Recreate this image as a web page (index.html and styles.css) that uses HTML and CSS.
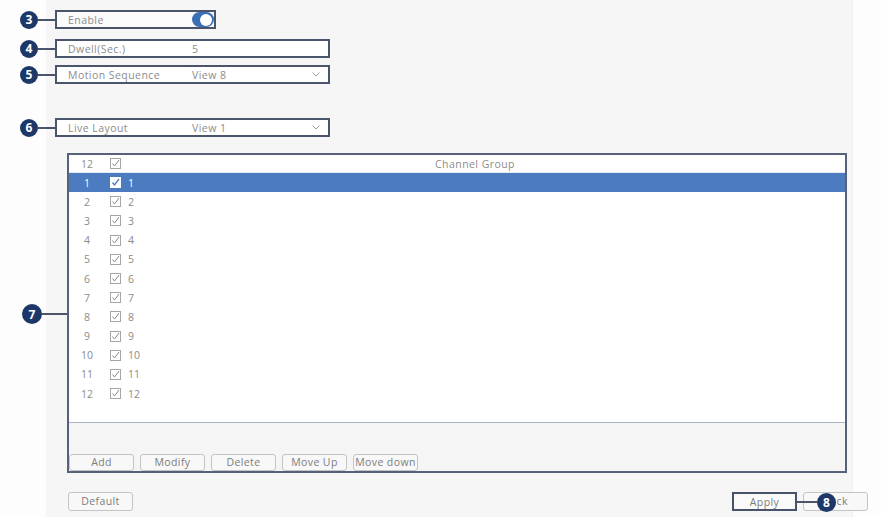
FILE: index.html
```html
<!DOCTYPE html>
<html>
<head>
<meta charset="utf-8">
<link rel="stylesheet" href="styles.css">
</head>
<body>
<div class="page">
  <div class="panel">
    <div class="form">
      <div class="field f-enable">
        <span class="label">Enable</span>
        <span class="toggle"><span class="knob"></span></span>
      </div>
      <div class="field f-wide f-dwell">
        <span class="label">Dwell(Sec.)</span>
        <span class="value">5</span>
      </div>
      <div class="field f-wide f-motion">
        <span class="label">Motion Sequence</span>
        <span class="value">View 8</span>
        <svg class="chev" width="8" height="5" viewBox="0 0 8 5"><polyline points="0.5,0.5 4,4 7.5,0.5" fill="none" stroke="#9a9a9a" stroke-width="1"/></svg>
      </div>
      <div class="field f-wide f-live">
        <span class="label">Live Layout</span>
        <span class="value">View 1</span>
        <svg class="chev" width="8" height="5" viewBox="0 0 8 5"><polyline points="0.5,0.5 4,4 7.5,0.5" fill="none" stroke="#9a9a9a" stroke-width="1"/></svg>
      </div>
    </div>

    <div class="table">
      <div class="list">
        <div class="row head">
          <span class="idx">12</span>
          <span class="cell">
            <span class="cb"><svg width="9" height="9" viewBox="0 0 9 9"><polyline points="1.5,4.5 3.5,7 8,1" fill="none" stroke="#8a8a8a" stroke-width="1"/></svg></span>
            <span class="title">Channel Group</span>
          </span>
        </div>
        <div class="row sel">
          <span class="idx">1</span>
          <span class="cell">
            <span class="cb"><svg width="9" height="9" viewBox="0 0 9 9"><polyline points="1.5,4.5 3.5,7 8,1" fill="none" stroke="#4c7bc0" stroke-width="1.3"/></svg></span>
            <span class="val">1</span>
          </span>
        </div>
        <div class="row"><span class="idx">2</span><span class="cell"><span class="cb"><svg width="9" height="9" viewBox="0 0 9 9"><polyline points="1.5,4.5 3.5,7 8,1" fill="none" stroke="#8a8a8a" stroke-width="1"/></svg></span><span class="val">2</span></span></div>
        <div class="row"><span class="idx">3</span><span class="cell"><span class="cb"><svg width="9" height="9" viewBox="0 0 9 9"><polyline points="1.5,4.5 3.5,7 8,1" fill="none" stroke="#8a8a8a" stroke-width="1"/></svg></span><span class="val">3</span></span></div>
        <div class="row"><span class="idx">4</span><span class="cell"><span class="cb"><svg width="9" height="9" viewBox="0 0 9 9"><polyline points="1.5,4.5 3.5,7 8,1" fill="none" stroke="#8a8a8a" stroke-width="1"/></svg></span><span class="val">4</span></span></div>
        <div class="row"><span class="idx">5</span><span class="cell"><span class="cb"><svg width="9" height="9" viewBox="0 0 9 9"><polyline points="1.5,4.5 3.5,7 8,1" fill="none" stroke="#8a8a8a" stroke-width="1"/></svg></span><span class="val">5</span></span></div>
        <div class="row"><span class="idx">6</span><span class="cell"><span class="cb"><svg width="9" height="9" viewBox="0 0 9 9"><polyline points="1.5,4.5 3.5,7 8,1" fill="none" stroke="#8a8a8a" stroke-width="1"/></svg></span><span class="val">6</span></span></div>
        <div class="row"><span class="idx">7</span><span class="cell"><span class="cb"><svg width="9" height="9" viewBox="0 0 9 9"><polyline points="1.5,4.5 3.5,7 8,1" fill="none" stroke="#8a8a8a" stroke-width="1"/></svg></span><span class="val">7</span></span></div>
        <div class="row"><span class="idx">8</span><span class="cell"><span class="cb"><svg width="9" height="9" viewBox="0 0 9 9"><polyline points="1.5,4.5 3.5,7 8,1" fill="none" stroke="#8a8a8a" stroke-width="1"/></svg></span><span class="val">8</span></span></div>
        <div class="row"><span class="idx">9</span><span class="cell"><span class="cb"><svg width="9" height="9" viewBox="0 0 9 9"><polyline points="1.5,4.5 3.5,7 8,1" fill="none" stroke="#8a8a8a" stroke-width="1"/></svg></span><span class="val">9</span></span></div>
        <div class="row"><span class="idx">10</span><span class="cell"><span class="cb"><svg width="9" height="9" viewBox="0 0 9 9"><polyline points="1.5,4.5 3.5,7 8,1" fill="none" stroke="#8a8a8a" stroke-width="1"/></svg></span><span class="val">10</span></span></div>
        <div class="row"><span class="idx">11</span><span class="cell"><span class="cb"><svg width="9" height="9" viewBox="0 0 9 9"><polyline points="1.5,4.5 3.5,7 8,1" fill="none" stroke="#8a8a8a" stroke-width="1"/></svg></span><span class="val">11</span></span></div>
        <div class="row"><span class="idx">12</span><span class="cell"><span class="cb"><svg width="9" height="9" viewBox="0 0 9 9"><polyline points="1.5,4.5 3.5,7 8,1" fill="none" stroke="#8a8a8a" stroke-width="1"/></svg></span><span class="val">12</span></span></div>
      </div>
      <div class="tfoot">
        <button class="btn">Add</button>
        <button class="btn">Modify</button>
        <button class="btn">Delete</button>
        <button class="btn">Move Up</button>
        <button class="btn">Move down</button>
      </div>
    </div>

    <div class="bottom">
      <button class="btn">Default</button>
      <span class="spacer"></span>
      <button class="btn btn-apply">Apply</button>
      <button class="btn btn-back">Back</button>
    </div>
  </div>

  <div class="callout c3"><span class="dot">3</span><span class="line"></span></div>
  <div class="callout c4"><span class="dot">4</span><span class="line"></span></div>
  <div class="callout c5"><span class="dot">5</span><span class="line"></span></div>
  <div class="callout c6"><span class="dot">6</span><span class="line"></span></div>
  <div class="callout c7"><span class="dot">7</span><span class="line"></span></div>
  <div class="callout c8"><span class="line"></span><span class="dot">8</span></div>
</div>
</body>
</html>
```

FILE: styles.css
```css
* { box-sizing: border-box; }
html, body { margin: 0; padding: 0; }
body {
  background: #fdfdfd;
  font-family: "Open Sans", "Noto Sans", sans-serif;
  font-size: 10.5px;
  letter-spacing: 0.45px;
  color: #8c8c8c;
}
.page {
  position: relative;
  width: 881px;
  height: 517px;
  overflow: hidden;
}
.panel {
  margin-left: 46px;
  width: 807px;
  height: 517px;
  background: #f6f6f6;
  border-right: 1px solid #f0f0f0;
  padding-top: 10px;
}
.form {
  padding-left: 9px;
  display: flex;
  flex-direction: column;
  align-items: flex-start;
}
.field {
  height: 19px;
  border: 2px solid #4a556b;
  display: flex;
  align-items: center;
  padding-left: 11px;
  background: #fafafa;
}
.f-enable { width: 161px; }
.f-wide { width: 275px; padding-right: 8px; background: #fff; }
.f-dwell { margin-top: 10px; }
.f-motion { margin-top: 7px; }
.f-live { margin-top: 34px; }
.label { width: 124px; flex: none; white-space: nowrap; }
.value { flex: 1; }
.chev { flex: none; }
.toggle {
  margin-left: auto;
  width: 28px;
  height: 15px;
  border-radius: 8px;
  background: #3a6fb5;
  display: flex;
  align-items: center;
  justify-content: flex-end;
  padding-right: 2px;
}
.knob {
  width: 12px;
  height: 12px;
  border-radius: 50%;
  background: #fff;
}

.table {
  margin-top: 16px;
  margin-left: 21px;
  width: 780px;
  height: 320px;
  border: 2px solid #56627a;
  display: flex;
  flex-direction: column;
  background: #f5f5f5;
}
.list {
  height: 268px;
  background: #fff;
  border-bottom: 1px solid #aab3c0;
  flex: none;
}
.row {
  height: 19.2px;
  display: flex;
  align-items: center;
}
.row.head { height: 18px; border-bottom: 1px solid #e6e9ee; }
.idx { width: 36px; text-align: center; flex: none; letter-spacing: 0; }
.cell { flex: 1; display: flex; align-items: center; padding-left: 5px; }
.cb {
  width: 11px;
  height: 11px;
  border: 1px solid #a6a6a6;
  display: flex;
  align-items: center;
  justify-content: center;
  flex: none;
  background: #fff;
}
.val { margin-left: 7px; letter-spacing: 0; }
.title { flex: 1; text-align: center; padding-right: 16px; }
.row.sel { background: #4c7bc0; color: #fff; }
.row.sel .cb { border-color: #fff; }

.tfoot {
  flex: 1;
  display: flex;
  align-items: flex-end;
  gap: 6px;
}
.btn {
  width: 65px;
  height: 17px;
  border: 1px solid #c4c4c4;
  border-radius: 3px;
  background: #f8f8f8;
  font-family: "Open Sans", "Noto Sans", sans-serif;
  font-size: 10.5px;
  letter-spacing: 0.4px;
  color: #7c7c7c;
  padding: 0;
  line-height: 15px;
  white-space: nowrap;
  overflow: hidden;
}
.bottom {
  margin-top: 19px;
  margin-left: 22px;
  width: 800px;
  display: flex;
  align-items: center;
  gap: 6px;
}
.bottom .btn { height: 19px; line-height: 17px; }
.spacer { flex: 1; }
.btn-apply { border: 2px solid #48536a; border-radius: 0; background: #fafafa; }

.callout {
  position: absolute;
  display: flex;
  align-items: center;
}
.dot {
  width: 18px;
  height: 18px;
  border-radius: 50%;
  background: #1d3868;
  color: #fff;
  font-family: "Open Sans", sans-serif;
  font-weight: 700;
  font-size: 12px;
  letter-spacing: 0;
  display: flex;
  align-items: center;
  justify-content: center;
  flex: none;
}
.line {
  height: 2px;
  background: #4a556b;
}
.c3 { left: 20px; top: 10.5px; }
.c4 { left: 20px; top: 39.5px; }
.c5 { left: 20px; top: 65.5px; }
.c6 { left: 20px; top: 118.5px; }
.c3 .line, .c4 .line, .c5 .line, .c6 .line { width: 17px; }
.c7 { left: 22px; top: 304px; }
.c7 .dot { width: 20px; height: 20px; }
.c7 .line { width: 25px; }
.c8 { left: 797px; top: 492.5px; }
.c8 .line { width: 20px; }
.c8 .dot { width: 19px; height: 19px; }
```
